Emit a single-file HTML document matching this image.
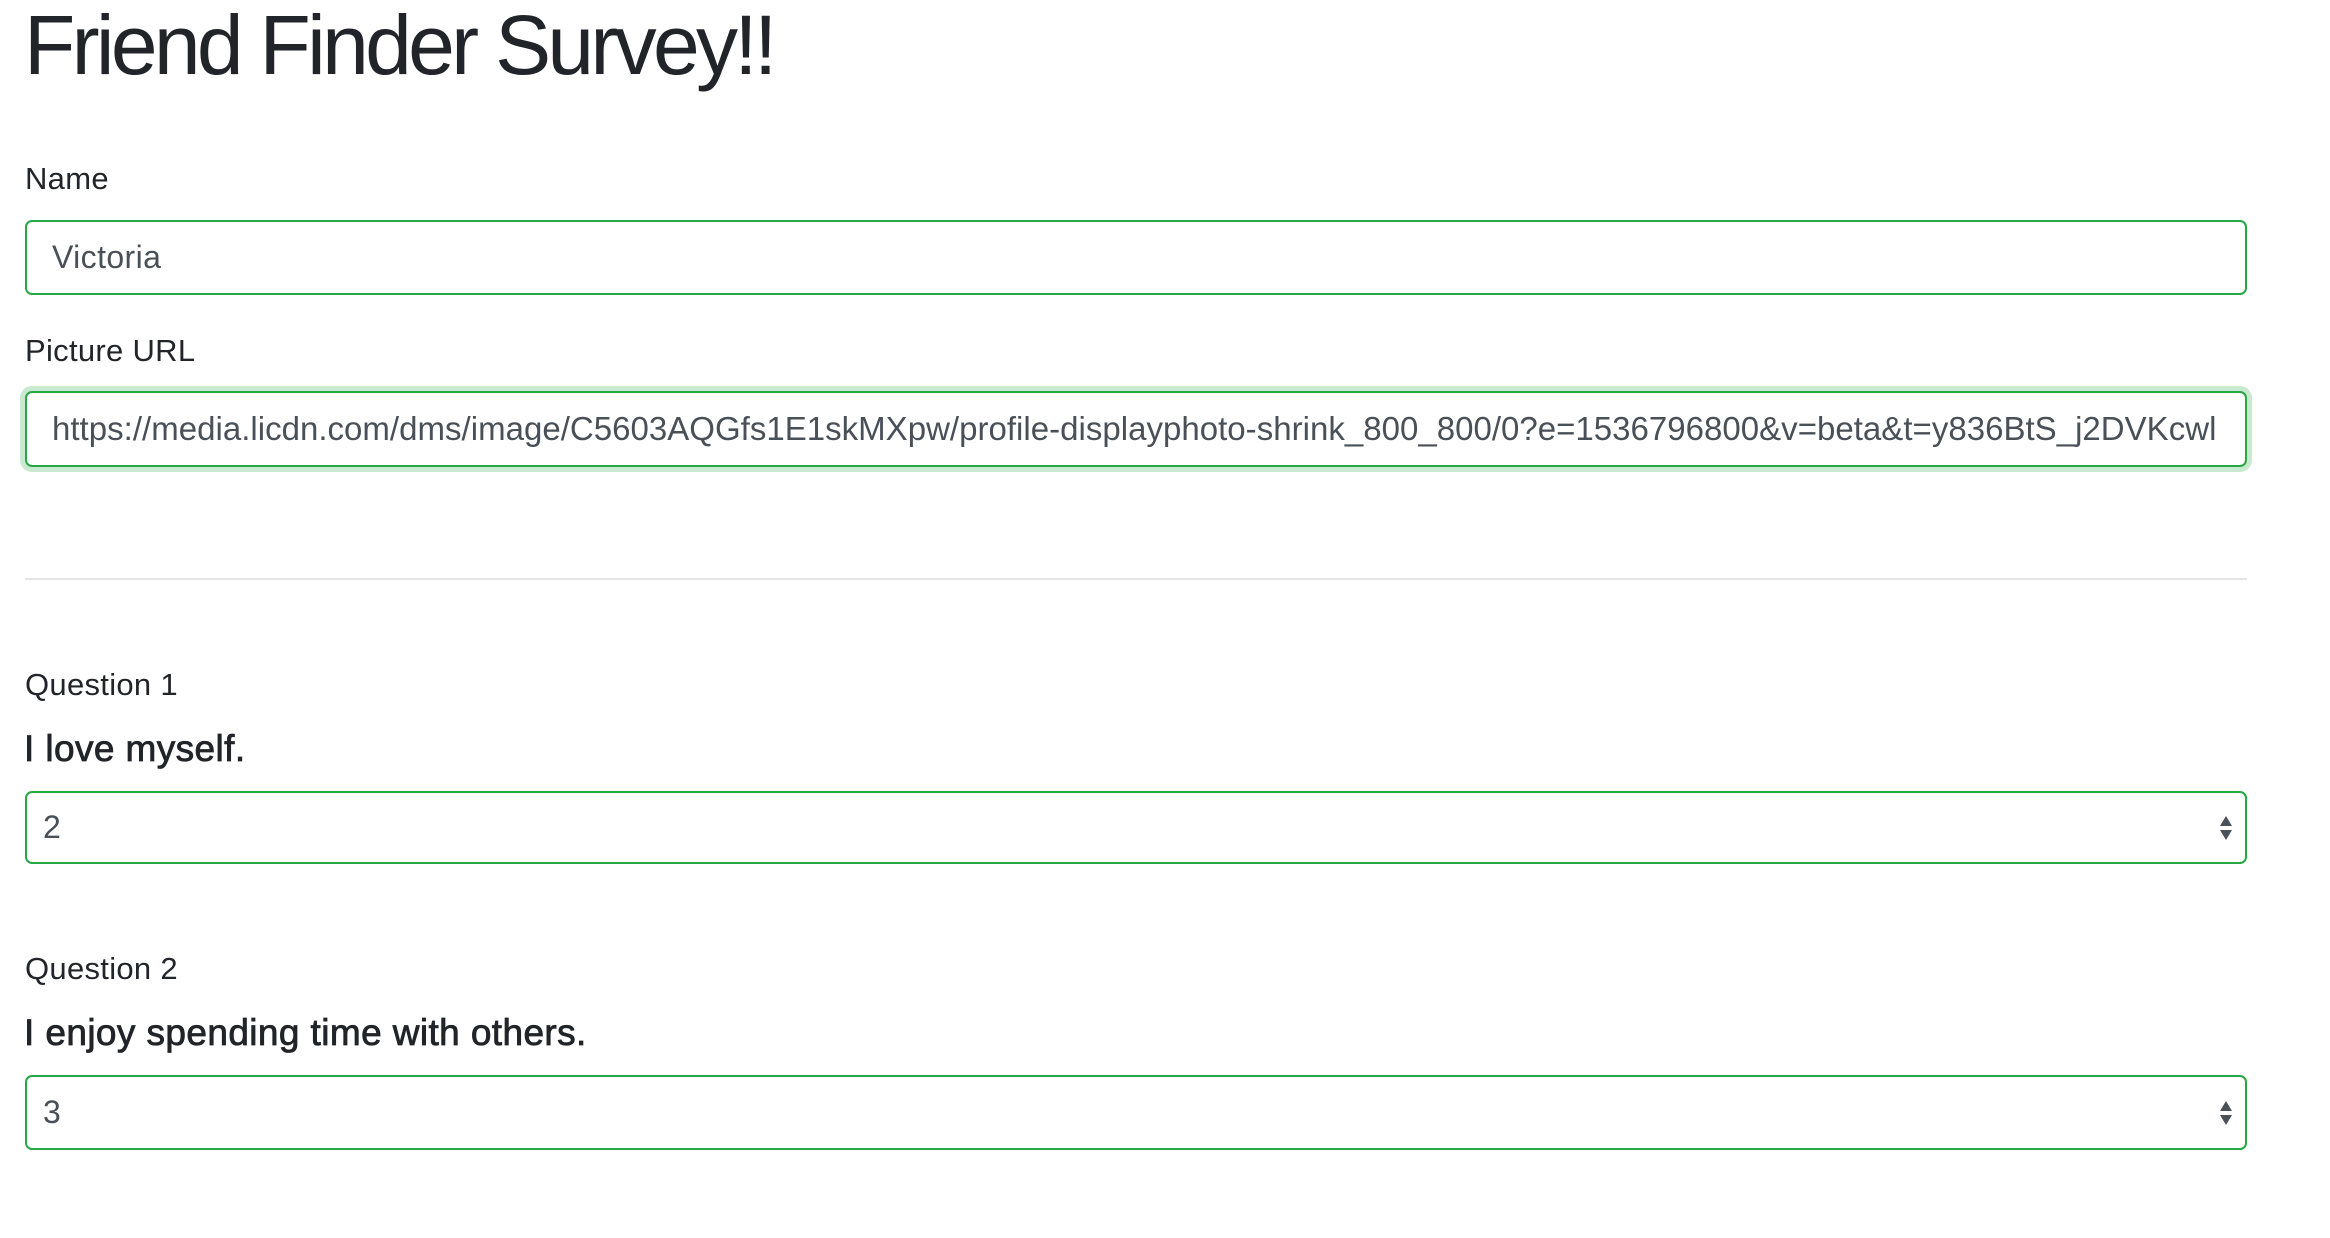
<!DOCTYPE html>
<html><head><meta charset="utf-8"><style>
body{margin:0;width:2330px;height:1238px;background:#fff;font-family:"Liberation Sans",Arial,sans-serif;color:#212529;position:relative;overflow:hidden}
.a{position:absolute;white-space:nowrap}
h1{position:absolute;left:24px;top:-5px;margin:0;font-size:84px;font-weight:500;letter-spacing:-3.7px;line-height:100px}
.lbl{font-size:31px;line-height:34px;left:25px;letter-spacing:0.3px}
.q{font-size:37px;line-height:44px;left:24px;letter-spacing:0.4px}
.box{position:absolute;left:25px;width:2222px;border:2px solid #28a745;border-radius:7px;box-sizing:border-box;background:#fff;color:#495057;font-size:32px;overflow:hidden;white-space:nowrap}
.arr{position:absolute;right:12px;top:50%;transform:translateY(-50%);width:14px;height:30px}
</style></head><body>
<h1>Friend Finder Survey!!</h1>
<div class="a lbl" style="top:162px">Name</div>
<div class="box" style="top:220px;height:75px;line-height:71px;padding-left:25px;letter-spacing:0.4px">Victoria</div>
<div class="a lbl" style="top:334px">Picture URL</div>
<div class="box" style="top:391px;height:76px;line-height:72px;padding-left:25px;box-shadow:0 0 0 5px rgba(40,167,69,.25);width:2222px"><span style="display:inline-block;width:2165px;overflow:hidden;font-size:33px;letter-spacing:0.02px">https://media.licdn.com/dms/image/C5603AQGfs1E1skMXpw/profile-displayphoto-shrink_800_800/0?e=1536796800&amp;v=beta&amp;t=y836BtS_j2DVKcwlh</span></div>
<div class="a" style="left:25px;top:578px;width:2222px;height:2px;background:#e5e5e5"></div>
<div class="a lbl" style="top:668px">Question 1</div>
<div class="a q" style="top:727px;-webkit-text-stroke:0.8px #212529">I love myself.</div>
<div class="box" style="top:791px;height:73px;line-height:69px;padding-left:16px">2<svg class="arr" viewBox="0 0 14 30"><path d="M7 3L13 13H1Z M7 27L13 17H1Z" fill="#495057"/></svg></div>
<div class="a lbl" style="top:952px">Question 2</div>
<div class="a q" style="top:1011px;-webkit-text-stroke:0.8px #212529">I enjoy spending time with others.</div>
<div class="box" style="top:1075px;height:75px;line-height:71px;padding-left:16px">3<svg class="arr" viewBox="0 0 14 30"><path d="M7 3L13 13H1Z M7 27L13 17H1Z" fill="#495057"/></svg></div>
</body></html>
